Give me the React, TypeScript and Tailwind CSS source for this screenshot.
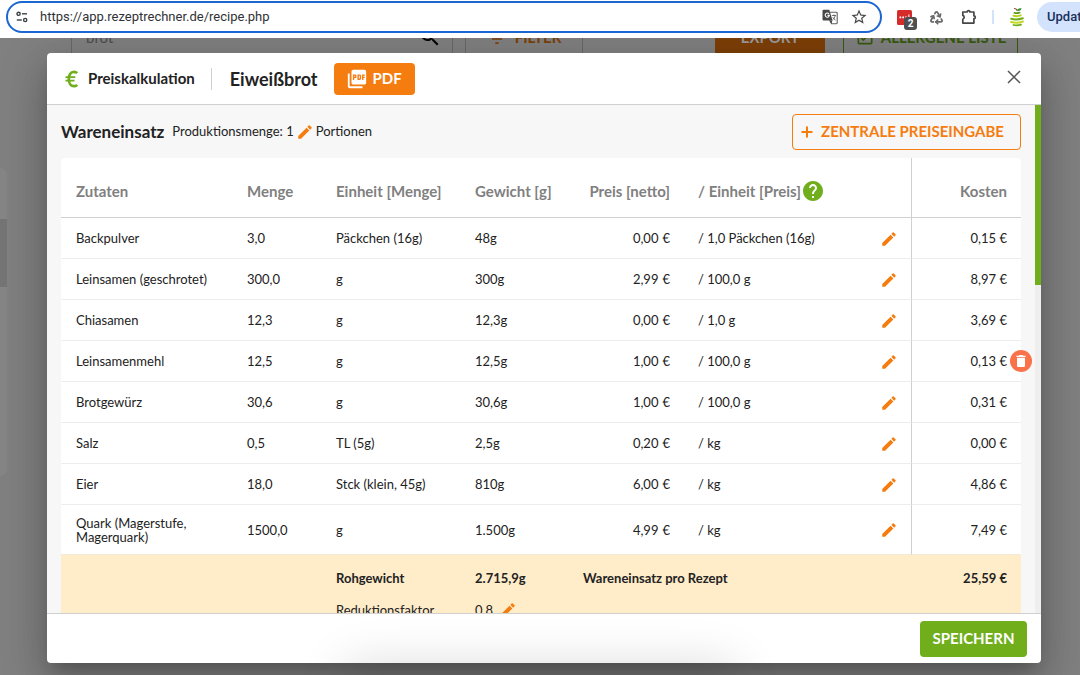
import type { ReactNode } from 'react';
import { MdDelete, MdEdit, MdFilterList, MdHelp, MdOutlineCheckBox, MdPictureAsPdf, MdSearch, MdStarBorder } from 'react-icons/md';
import { Recycle } from 'lucide-react';

type Ingredient = {
  name: string;
  amount: string;
  unit: string;
  weight: string;
  price: string;
  priceUnit: string;
  cost: string;
  deletable?: boolean;
};

const ingredients: Ingredient[] = [
  { name: 'Backpulver', amount: '3,0', unit: 'Päckchen (16g)', weight: '48g', price: '0,00', priceUnit: '/ 1,0 Päckchen (16g)', cost: '0,15 €' },
  { name: 'Leinsamen (geschrotet)', amount: '300,0', unit: 'g', weight: '300g', price: '2,99', priceUnit: '/ 100,0 g', cost: '8,97 €' },
  { name: 'Chiasamen', amount: '12,3', unit: 'g', weight: '12,3g', price: '0,00', priceUnit: '/ 1,0 g', cost: '3,69 €' },
  { name: 'Leinsamenmehl', amount: '12,5', unit: 'g', weight: '12,5g', price: '1,00', priceUnit: '/ 100,0 g', cost: '0,13 €', deletable: true },
  { name: 'Brotgewürz', amount: '30,6', unit: 'g', weight: '30,6g', price: '1,00', priceUnit: '/ 100,0 g', cost: '0,31 €' },
  { name: 'Salz', amount: '0,5', unit: 'TL (5g)', weight: '2,5g', price: '0,20', priceUnit: '/ kg', cost: '0,00 €' },
  { name: 'Eier', amount: '18,0', unit: 'Stck (klein, 45g)', weight: '810g', price: '6,00', priceUnit: '/ kg', cost: '4,86 €' },
  { name: 'Quark (Magerstufe, Magerquark)', amount: '1500,0', unit: 'g', weight: '1.500g', price: '4,99', priceUnit: '/ kg', cost: '7,49 €' },
];

function EditButton({ label }: { label: string }) {
  return (
    <button type="button" aria-label={label} className="block text-[#f57c0f]">
      <MdEdit className="size-[18px]" />
    </button>
  );
}

function TuneIcon() {
  return (
    <svg viewBox="0 0 12 12" className="size-3" fill="none" stroke="#3c4043" strokeWidth="1.4">
      <circle cx="2.6" cy="2.8" r="1.6" />
      <path d="M6 2.8h5" />
      <circle cx="9.2" cy="9" r="1.6" />
      <path d="M.8 9h5" />
    </svg>
  );
}

function TranslateIcon() {
  return (
    <svg viewBox="0 0 16 16" className="size-4" fill="none">
      <path d="M8 3.200h6.200a1 1 0 0 1 1 1v9.600a1 1 0 0 1-1 1H9.500L8 11.500" stroke="#5f6164" strokeWidth="1.100" />
      <path d="M1.500.8h5.800l3.200 10.700H1.500a1 1 0 0 1-1-1V1.800a1 1 0 0 1 1-1z" fill="#474747" />
      <path d="M7 4.800A2.100 2.100 0 1 0 7.400 6.400H5.500" stroke="#fff" strokeWidth="1.100" />
      <path d="M9.800 6.500h4.200M12 5.500v1M13.200 6.500c-.4 2-1.400 3.400-2.700 4.500M10.800 8.300c.6 1.200 1.600 2.200 2.800 2.900" stroke="#5f6164" strokeWidth=".9" />
      <path d="M7 11.500l2.500 3.300.8-3.300z" fill="#474747" />
    </svg>
  );
}

function PuzzleIcon() {
  return (
    <svg viewBox="0 0 16 16" className="size-4" fill="none" stroke="#474747" strokeWidth="1.700" strokeLinejoin="round">
      <path d="M1.800 3h4.300a1.400 1.400 0 0 1 2.800 0h4v3.800a1.400 1.400 0 0 1 0 2.800v4.500H1.800v-3.900a2 2 0 0 0 0-3.800z" />
    </svg>
  );
}

function PearLogo() {
  return (
    <svg viewBox="0 0 16 20" className="h-5 w-4" fill="none" strokeLinecap="round">
      <path d="M8 3.500C7.800 2.500 7 1.600 5.500 1.500" stroke="#8a4b22" strokeWidth="1.200" />
      <path d="M8 3.800c.2-1.800 1.600-2.900 4.500-2.600-.4 2-2 3.100-4.500 2.600z" fill="#2f8f2f" />
      <path d="M5.500 5.800c1.700.5 3.300.4 5-.2" stroke="#5d9e1a" strokeWidth="1.800" />
      <path d="M4.500 8.700c2.500.7 5 .5 7.200-.3" stroke="#b9d31f" strokeWidth="2" />
      <path d="M2.200 11.800c4 1 8 .7 11.600-.5" stroke="#6fae1b" strokeWidth="2" />
      <path d="M2 15c4 1.100 8.500.8 12-.5" stroke="#c6d922" strokeWidth="2" />
      <path d="M4.500 18c2.500.7 5 .5 7.500-.3" stroke="#6fae1b" strokeWidth="1.800" />
    </svg>
  );
}

function EuroIcon() {
  return (
    <svg viewBox="0 0 13 18" className="h-[18px] w-[13px]" fill="none" stroke="#70ae1b">
      <path d="M12.200 3.100C11.200 2.200 10.200 1.800 9 1.800c-3.200 0-5.200 2.900-5.200 7.200s2 7.200 5.200 7.200c1.200 0 2.200-.4 3.200-1.300" strokeWidth="2.700" />
      <path d="M.5 7.200h9.800M.5 10.700h9" strokeWidth="1.800" />
    </svg>
  );
}

function BrowserBar() {
  return (
    <header className="flex h-[38px] shrink-0 items-center bg-white pb-1 pl-1.5 font-['Roboto',sans-serif]">
      <div className="mr-[15px] flex h-8 flex-1 items-center rounded-full border-2 border-[#1b66d2] pr-3 pl-2">
        <TuneIcon />
        <input
          aria-label="Adresse"
          defaultValue="https://app.rezeptrechner.de/recipe.php"
          className="ml-3 min-w-0 flex-1 bg-transparent text-[13px] text-[#303236] outline-none"
        />
        <div className="flex items-center gap-3 text-[#474747]">
          <button type="button" aria-label="Übersetzen"><TranslateIcon /></button>
          <button type="button" aria-label="Lesezeichen"><MdStarBorder className="size-[18px]" /></button>
        </div>
      </div>
      <div className="flex items-center text-[#474747]">
        <button type="button" aria-label="Erweiterung, 2 Hinweise" className="relative flex h-[22px] w-5 items-center">
          <svg viewBox="0 0 15 15" className="size-[15px]">
            <rect width="15" height="15" rx="1.500" fill="#d52b2b" />
            <path d="M2.500 6.500h1.700v1.700H2.500zM5.300 6.500H7v1.700H5.300zM8.100 6.500h1.700v1.700H8.100zM11.400 4.500h1v4h-1z" fill="#fff" />
          </svg>
          <span className="absolute right-0 -bottom-0.5 flex size-[13px] items-center justify-center rounded-[3px] bg-[#4d4f52] text-[10px] font-bold text-white">2</span>
        </button>
        <button type="button" aria-label="Recycling" className="ml-3 text-[#6a6a6a]"><Recycle className="size-[15px]" strokeWidth={2.8} /></button>
        <button type="button" aria-label="Erweiterungen" className="ml-[17px]"><PuzzleIcon /></button>
        <span className="ml-[15px] h-3.5 w-0.5 bg-[#d3e3fd]" />
        <button type="button" aria-label="Rezeptrechner" className="ml-[15px]"><PearLogo /></button>
        <button type="button" className="ml-3 h-[30px] w-[43px] overflow-hidden rounded-l-full bg-[#d3e3fd] pl-2.5 text-left text-[13px] font-medium whitespace-nowrap text-[#17305a]">Update</button>
      </div>
    </header>
  );
}

function PageBehind() {
  return (
    <div aria-hidden="true" className="h-full overflow-hidden">
      <div className="-mt-[21px] flex h-10 items-stretch pr-[62px] pl-[71px] text-[15px] font-bold">
        <div className="mr-3 flex w-[382px] items-center justify-between border border-[#686868] pr-2.5 pl-3.5 font-normal text-[#4e4e4e]">
          <span>brot</span>
          <MdSearch className="size-6 text-black" />
        </div>
        <div className="flex w-[118px] items-center justify-center gap-2 border border-[#686868] text-[#7d3f08]">
          <MdFilterList className="mt-1 size-5" />
          FILTER
        </div>
        <div className="mr-[18px] ml-auto flex w-[110px] items-center justify-center bg-[#7d3f08] text-[#9a9a9a]">EXPORT</div>
        <div className="flex w-[175px] items-center justify-center gap-1.5 border border-[#38590f] text-[#38590f]">
          <MdOutlineCheckBox className="size-5" />
          ALLERGENE LISTE
        </div>
      </div>
      <div className="mt-[111px] h-[308px] w-[7px] rounded-tr-lg rounded-br-lg bg-[#858585] pt-[51px]">
        <div className="h-[68px] bg-[#757575]" />
      </div>
    </div>
  );
}

function HeadCell({ children }: { children?: ReactNode }) {
  return <th scope="col" className="px-[15px] pt-1.5 text-left font-bold whitespace-nowrap">{children}</th>;
}

function CostTable() {
  return (
    <table className="w-full table-fixed border-separate border-spacing-0 rounded-t bg-white text-[13px] leading-[14px] text-[#222]">
      <colgroup>
        <col className="w-[171px]" />
        <col className="w-[89px]" />
        <col className="w-[139px]" />
        <col className="w-[108px]" />
        <col className="w-[115px]" />
        <col />
        <col className="w-[46px]" />
        <col className="w-[110px]" />
      </colgroup>
      <thead className="text-[15px] text-[#808080]">
        <tr className="h-[60px] *:border-b *:border-[#d0d0d0]">
          <HeadCell>Zutaten</HeadCell>
          <HeadCell>Menge</HeadCell>
          <HeadCell>Einheit [Menge]</HeadCell>
          <HeadCell>Gewicht [g]</HeadCell>
          <th scope="col" className="pt-1.5 pr-[13px] text-right font-bold whitespace-nowrap">Preis [netto]</th>
          <HeadCell>
            <span className="flex items-center">
              / Einheit [Preis]
              <MdHelp className="-my-1 size-6 text-[#70ae1b]" />
            </span>
          </HeadCell>
          <td />
          <th scope="col" className="border-l px-3.5 pt-1.5 text-right font-bold">Kosten</th>
        </tr>
      </thead>
      <tbody>
        {ingredients.map((item) => (
          <tr key={item.name} className="h-[41px] *:border-b *:border-b-[#ededed] last:h-[50px] last:*:border-b-[#f3ead8]">
            <td className="px-[15px]">{item.name}</td>
            <td className="px-[15px]">{item.amount}</td>
            <td className="px-[15px] whitespace-nowrap">{item.unit}</td>
            <td className="px-[15px]">{item.weight}</td>
            <td className="px-[13px] text-right">{item.price}<span className="ml-1">€</span></td>
            <td className="px-[15px]">{item.priceUnit}</td>
            <td className="pt-px pl-[15px]"><EditButton label={`Preis von ${item.name} bearbeiten`} /></td>
            <td className="relative border-l border-l-[#d0d0d0] px-3.5 text-right">
              {item.cost}
              {item.deletable && (
                <button type="button" aria-label={`${item.name} löschen`} className="absolute top-1/2 -right-[11px] flex size-[22px] -translate-y-1/2 items-center justify-center rounded-full bg-[#f9724a] text-white">
                  <MdDelete className="size-4" />
                </button>
              )}
            </td>
          </tr>
        ))}
      </tbody>
      <tfoot className="bg-[#ffecc9]">
        <tr className="h-10 font-bold *:pt-1.5">
          <td colSpan={2} />
          <td className="px-[15px]">Rohgewicht</td>
          <td className="px-[15px]">2.715,9g</td>
          <td colSpan={3} className="px-[15px]">Wareneinsatz pro Rezept</td>
          <td className="px-3.5 text-right">25,59 €</td>
        </tr>
        <tr className="h-[30px]">
          <td colSpan={2} />
          <td className="px-[15px]">Reduktionsfaktor</td>
          <td className="px-[15px]">
            <span className="flex items-center gap-1.5">0.8<EditButton label="Reduktionsfaktor bearbeiten" /></span>
          </td>
          <td colSpan={4} />
        </tr>
      </tfoot>
    </table>
  );
}

export default function App() {
  return (
    <div className="relative flex h-screen flex-col overflow-hidden bg-white font-['Lato',sans-serif] text-[#222]">
      <BrowserBar />
      <main className="relative min-h-0 flex-1 overflow-hidden bg-[#808080]">
        <PageBehind />
        <div className="absolute inset-0 flex pt-[15px] pr-[39px] pb-3 pl-[47px]">
          <section role="dialog" aria-label="Preiskalkulation" className="flex min-w-0 flex-1 flex-col rounded bg-white shadow-[0_11px_15px_-7px_rgba(0,0,0,0.2),0_24px_38px_3px_rgba(0,0,0,0.14),0_9px_46px_8px_rgba(0,0,0,0.12)]">
            <div className="flex h-[52px] shrink-0 items-center border-b border-[#d0d0d0] pr-5 pl-[18px]">
              <EuroIcon />
              <h1 className="ml-2.5 text-[15px] font-bold">Preiskalkulation</h1>
              <span className="mr-[18px] ml-4 h-[22px] w-px bg-[#d0d0d0]" />
              <h2 className="text-lg font-bold">Eiweißbrot</h2>
              <button type="button" className="ml-4 flex h-8 w-[81px] items-center justify-center gap-1 rounded bg-[#f57c0f] text-[15px] font-bold text-white">
                <MdPictureAsPdf className="size-[22px]" />
                PDF
              </button>
              <button type="button" aria-label="Schließen" className="ml-auto pb-1">
                <svg viewBox="0 0 14 14" className="size-3.5" fill="none" stroke="#555" strokeWidth="1.500">
                  <path d="M1 1l12 12M13 1L1 13" />
                </svg>
              </button>
            </div>
            <div className="flex min-h-0 flex-1 bg-[#f7f7f7]">
              <div className="min-w-0 flex-1 overflow-hidden px-3.5">
                <div className="flex h-[53px] items-center">
                  <h3 className="text-[17px] font-bold">Wareneinsatz</h3>
                  <p className="ml-2 flex items-center gap-0.5 text-[13px]">
                    Produktionsmenge: 1
                    <EditButton label="Produktionsmenge bearbeiten" />
                    Portionen
                  </p>
                  <button type="button" className="ml-auto flex h-9 items-center gap-2 rounded border border-[#f57c0f] pr-4 pl-2 text-[15px] font-bold text-[#f57c0f]">
                    <svg viewBox="0 0 12 12" className="size-3" stroke="currentColor" strokeWidth="2">
                      <path d="M6 .5v11M.5 6h11" />
                    </svg>
                    ZENTRALE PREISEINGABE
                  </button>
                </div>
                <CostTable />
              </div>
              <div className="w-1.5 shrink-0 bg-[#efefef]">
                <div className="h-[180px] bg-[#70ae1b]" />
              </div>
            </div>
            <div className="flex h-[50px] shrink-0 items-center justify-end rounded-b border-t border-[#d0d0d0] px-3.5">
              <button type="button" className="h-9 w-[107px] rounded bg-[#70ae1b] text-[15px] font-bold text-white">SPEICHERN</button>
            </div>
          </section>
        </div>
      </main>
      <div aria-hidden="true" className="pointer-events-none absolute inset-x-0 top-full mx-auto h-10 w-[370px] shadow-[0_0_50px_10px_rgba(0,0,0,0.14)]" />
    </div>
  );
}
